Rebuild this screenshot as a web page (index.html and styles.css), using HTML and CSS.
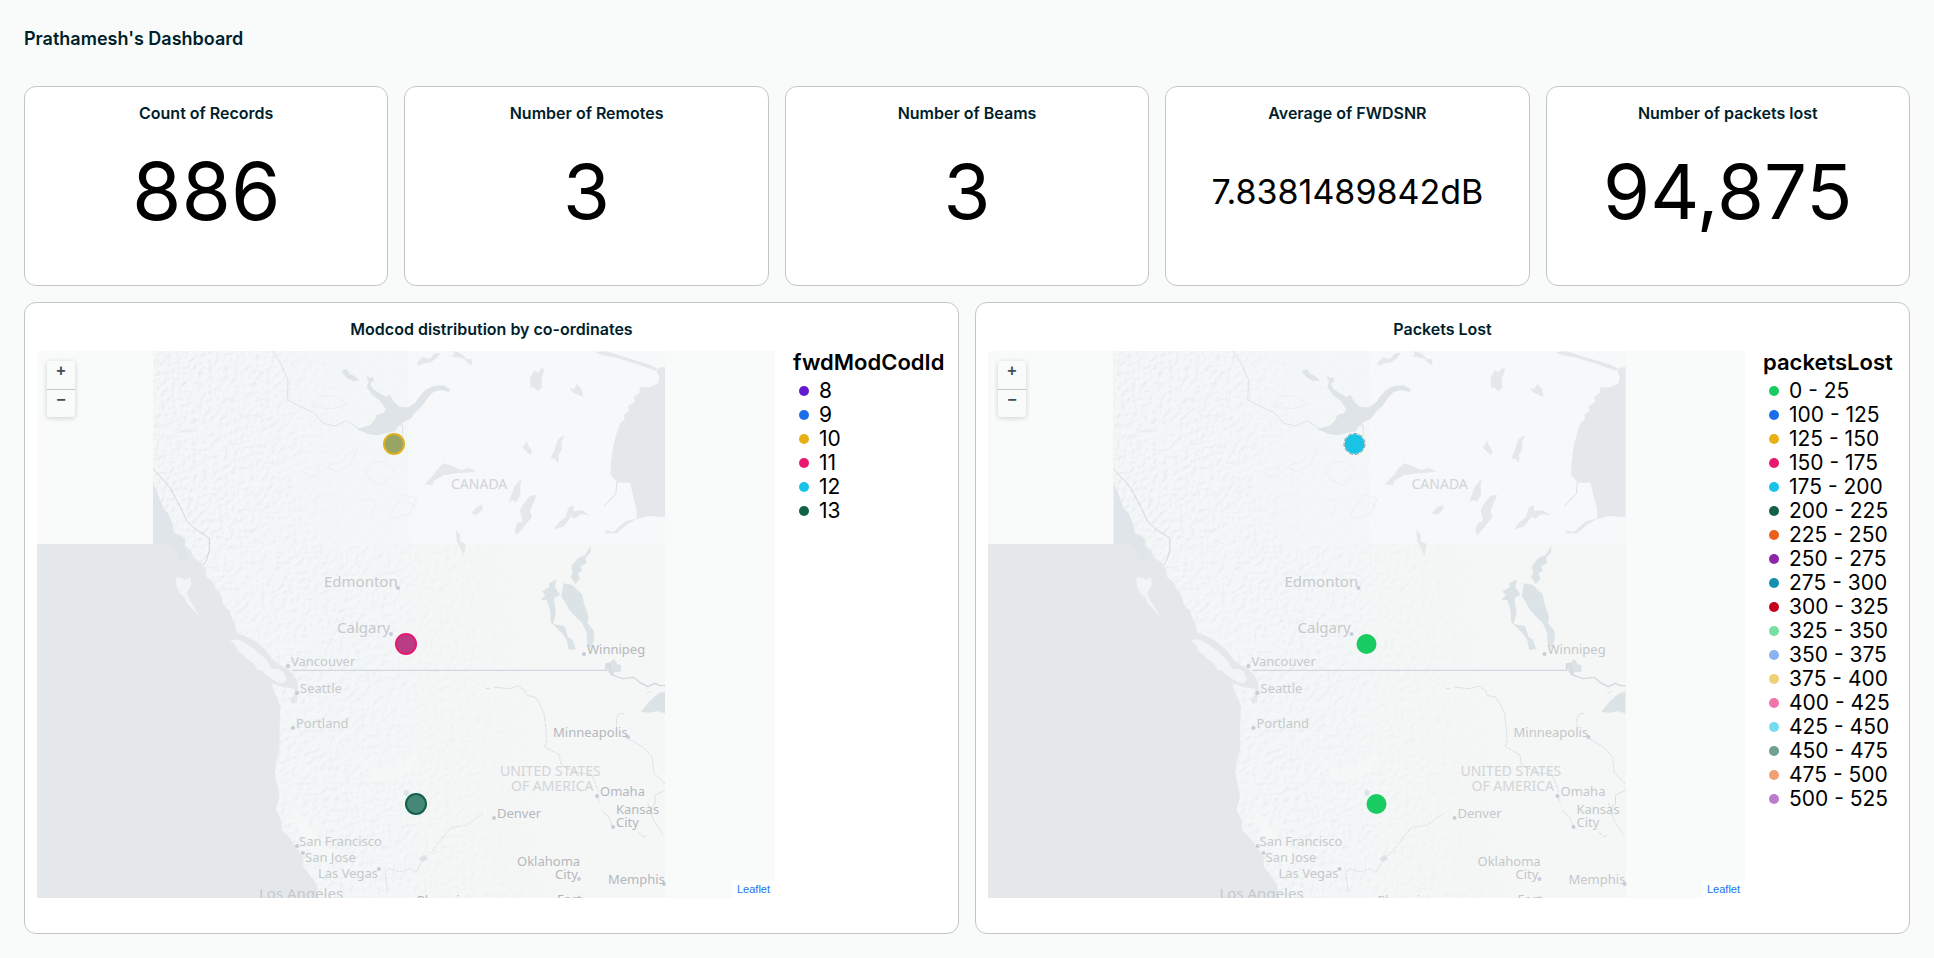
FILE: index.html
```html
<!DOCTYPE html>
<html lang="en">
<head>
<meta charset="utf-8">
<title>Prathamesh's Dashboard</title>
<link rel="stylesheet" href="styles.css">
</head>
<body>
<svg class="defs" width="0" height="0" aria-hidden="true">
  <defs>
    <filter id="relief" x="0" y="0" width="100%" height="100%" color-interpolation-filters="sRGB">
      <feTurbulence type="fractalNoise" baseFrequency="0.19" numOctaves="4" seed="7"/>
      <feDiffuseLighting surfaceScale="2" lighting-color="#ffffff" result="l"><feDistantLight azimuth="225" elevation="55"/></feDiffuseLighting>
      <feColorMatrix type="matrix" values="0 0 0 0 .55  0 0 0 0 .6  0 0 0 0 .63  -1.2 0 0 0 1.02"/>
    </filter>
    <linearGradient id="fadeEast" x1="153" x2="560" y1="0" y2="0" gradientUnits="userSpaceOnUse">
      <stop offset="0" stop-color="#fff"/><stop offset=".3" stop-color="#fff" stop-opacity=".8"/><stop offset=".5" stop-color="#fff" stop-opacity=".15"/><stop offset="1" stop-color="#fff" stop-opacity="0"/>
    </linearGradient>
    <linearGradient id="fadeSouth" x1="153" x2="560" y1="544" y2="500" gradientUnits="userSpaceOnUse">
      <stop offset="0" stop-color="#fff"/><stop offset=".4" stop-color="#fff" stop-opacity=".9"/><stop offset=".75" stop-color="#fff" stop-opacity=".5"/><stop offset=".9" stop-color="#fff" stop-opacity="0"/>
    </linearGradient>
    <path id="coast" d="M399 153H1935V1794H895L890 1755 870 1725 850 1700V1672L830 1645 812 1618 800 1605 785 1590 784 1560 768 1530 778 1490 775 1470 764 1420 768 1390 778 1350 780 1240 782 1220 770 1190 760 1168 755 1150 790 1162 812 1164 824 1168 820 1188 810 1198 816 1212 830 1208 834 1160 828 1138 818 1122 800 1104 790 1100 770 1090 748 1066 738 1050 720 1035 704 1022 690 1015 668 1004 650 1000 645 970 634 950 628 930 612 918 600 880 588 866 578 845 560 832 556 808 545 790 520 772 512 750 496 738 494 716 478 704 462 700 458 672 444 640 430 625 420 600 412 578 404 560 399 543Z"/>
    <clipPath id="landClip" clipPathUnits="userSpaceOnUse"><use href="#coast" transform="translate(20 300) scale(.33333)"/></clipPath>
    <mask id="northMask" maskUnits="userSpaceOnUse" x="153" y="351" width="512" height="193"><rect x="153" y="351" width="512" height="193" fill="url(#fadeEast)"/></mask>
    <mask id="southMask" maskUnits="userSpaceOnUse" x="153" y="544" width="512" height="360"><rect x="153" y="544" width="512" height="360" fill="url(#fadeSouth)"/></mask>
    <symbol id="terrain" viewBox="-94 351 1000 547" overflow="visible">
      <rect x="-300" y="544" width="965" height="360" fill="#e4e8eb"/>
      <rect x="153" y="351" width="512" height="193" fill="#e0e5e9"/>
      <g transform="translate(20 300) scale(.33333)">
        <use href="#coast" fill="#f4f7f8"/>
        <rect x="1168" y="153" width="767" height="579" fill="#f6f8fa"/>
        <rect x="1168" y="732" width="767" height="1062" fill="#f5f7f7"/>
      </g>
      <g clip-path="url(#landClip)">
        <g mask="url(#northMask)"><rect x="153" y="351" width="512" height="193" filter="url(#relief)" opacity=".2"/></g>
        <g mask="url(#southMask)"><rect x="153" y="544" width="512" height="360" filter="url(#relief)" opacity=".16"/></g>
      </g>
      <g transform="translate(20 300) scale(.33333)">
        <g fill="#f2f5f7">
          <path d="M467 832 488 834 494 840 512 832 514 856 500 878 508 898 518 914 540 950 520 930 498 905 494 890 482 884 470 860Z"/>
          <path d="M630 1022 648 1018 664 1022 684 1034 704 1048 720 1062 740 1080 748 1095 756 1108 774 1106 790 1115 800 1138 790 1150 770 1146 752 1134 738 1126 726 1112 712 1110 700 1090 680 1076 668 1062 652 1052 648 1036Z"/>
        </g>
        <g fill="#e0e5e9">
          <path d="M404 610 416 612 424 634 416 650 404 636ZM430 650 444 660 440 678 454 690 446 706 430 690 420 672ZM458 708 480 716 486 734 500 750 506 780 490 790 478 776 468 752 456 736ZM408 668 416 690 410 712 402 700Z"/>
        </g>
        <g fill="#dfe4e9">
          <path d="M964 214 978 206 990 222 1004 228 1018 242 998 242 980 234Z"/>
          <path d="M1038 226 1050 234 1058 230 1062 242 1050 252 1060 268 1078 280 1096 290 1110 284 1120 304 1138 320 1164 322 1186 308 1198 290 1216 270 1240 258 1270 256 1290 268 1288 276 1262 270 1240 276 1224 292 1206 318 1186 336 1172 356 1150 366 1132 382 1126 394 1104 398 1074 406 1044 402 1010 388 1030 382 1050 376 1066 358 1070 344 1090 340 1098 328 1080 302 1058 286 1040 262 1046 246Z"/>
        </g>
        <g fill="#e4e8ea" transform="translate(1140 0)">
          <path d="M795 200 776 204 770 216 778 230 774 250 750 262H720L718 278 702 290 704 306 684 318 688 332 672 344 674 358 660 370 650 400 640 436 633 490 632 525 652 548H690L700 590 710 630V658L745 648 795 652Z"/>
          <path d="M585 156 620 154 690 176 750 194 774 206 764 212 710 192 650 174 606 166Z"/>
          <path d="M50 190 66 172 88 178 104 160 122 158 108 176 90 188 70 190 58 198ZM146 168 162 166 160 154 174 156 188 164 200 178 214 176 216 196 204 190 192 176 172 172Z"/>
          <path d="M390 236 402 212 416 216 424 204 434 208 424 238 426 262 414 274 402 262 392 264ZM508 264 522 268 530 252 544 266 550 292 534 284 520 278Z"/>
          <path d="M366 440 376 434 378 420 386 438 396 452 392 466 380 456ZM452 476 462 452 468 436 474 418 494 404 484 428 486 448 476 462 476 490 464 476Z"/>
          <path d="M74 552 94 532 114 506 130 490 150 496 182 510 204 504 230 514 200 518 170 520 130 526 102 542 98 556Z"/>
          <path d="M326 608 334 586 342 562 356 544 364 538 360 562 362 586 348 606 338 600ZM214 640 230 622 248 614 248 628 230 644ZM344 694 352 668 368 664 360 630 376 604 390 588 410 584 400 610 390 632 396 652 378 672 366 688 350 706Z"/>
          <path d="M460 688 478 666 496 652 506 622 520 616 522 634 546 630 568 646 544 642 524 656 512 650 500 668 490 680ZM614 690 640 696 676 664 710 656 680 674 650 700 618 700Z"/>
          <path d="M168 690 180 704 180 724 198 732 192 768 178 738 170 724Z"/>
        </g>
        <g fill="#dce3e7" transform="translate(1140 0)">
          <path d="M572 738 572 756 556 774 560 790 540 800 548 812 534 820 540 836 526 852 512 832 518 818 514 798 534 774 556 764Z"/>
          <path d="M484 890 490 850 516 854 530 868 546 882 552 910 566 950 562 968 580 990 584 1010 576 1044 562 1036 560 1000 546 968 528 952 508 930 494 904Z"/>
          <path d="M422 900 436 886 426 874 448 862 446 850 470 838 464 860 480 884 462 894 464 912 468 940 460 972 494 978 504 1010 518 1020 528 1048 506 1050 500 1020 486 1000 468 982 452 966 450 930 440 900Z"/>
          <path d="M618 1092 632 1086 642 1076 652 1092 664 1096 662 1116 644 1116 634 1128 620 1110Z"/>
          <path d="M722 1236 748 1204 776 1180 795 1174V1240L770 1234 748 1238Z"/>
          <path d="M14 1468 28 1474 24 1490 12 1484ZM56 1676 72 1664 84 1676 68 1686Z"/>
        </g>
        <g fill="none" stroke="#d9e0e4" stroke-width="3" stroke-linejoin="round">
          <path d="M758 153 782 190 804 240 802 300 838 318 884 340 910 370 944 378 980 362 1020 388" stroke="#dde2e7"/>
          <path d="M1790 548 1788 580 1752 618M1880 1181 1895 1174"/>
          <path d="M1396 1166 1410 1166M1422 1162 1470 1166 1492 1158 1514 1170 1520 1186 1546 1192 1560 1214 1572 1240 1578 1290 1580 1320 1574 1340 1596 1352 1618 1364 1622 1392 1640 1404M1640 1404 1680 1420 1714 1422 1736 1476M1812 1240 1796 1242 1789 1256 1790 1280M1826 1316 1870 1342 1896 1370 1902 1420 1935 1452M1732 1490 1740 1510M1744 1530 1766 1550 1778 1580M1855 1596 1870 1610 1880 1606M1884 1510 1900 1560 1930 1606" stroke-dasharray="14 2"/>
          <path d="M1935 1470 1905 1486V1512L1890 1524"/>
          <path d="M1390 1540 1360 1560 1340 1576 1294 1582 1270 1610 1240 1650 1210 1676 1188 1716 1170 1706 1140 1716 1105 1706 1096 1720 1104 1780" stroke-dasharray="9 3"/>
        </g>
        <g fill="none" stroke="#e6ebed" stroke-width="3" opacity=".7">
          <path d="M640 324 670 350 700 344 770 370M875 322 900 290 940 286 984 314 940 326ZM1036 515 1060 484 1100 486 1126 516 1088 554 1050 540ZM920 500 960 484 1016 440 990 494 950 516ZM1034 596 1068 604 1056 650M1110 640 1150 584 1190 596 1170 640 1120 656ZM880 480 902 520 860 530M1164 606 1190 620"/>
        </g>
        <path d="M1146 376H1148V410M1138 376H1148" fill="none" stroke="#dde1e6" stroke-width="3"/>
        <path d="M399 507 430 540 452 566 480 620 504 668 530 690 568 714V750L560 780 550 795" fill="none" stroke="#d3d7de" stroke-width="3"/>
        <path d="M815 1111H1758V1092H1768L1776 1124 1806 1136 1842 1132 1860 1148 1884 1160 1904 1150 1920 1157H1935" fill="none" stroke="#d4d6de" stroke-width="4"/>
        <path d="M820 1530 850 1550 880 1600 935 1650 940 1690 910 1700 870 1650 840 1600Z" fill="#f6f8f7"/>
        <path d="M1010 1360 1070 1405 1130 1400 1190 1350 1200 1390 1130 1440 1060 1440Z" fill="#f6f8f7" opacity=".7"/>
      </g>
    </symbol>
    <g id="cities" fill="#c7ccd6">
      <circle cx="398" cy="588" r="2"/><circle cx="391" cy="634" r="2"/><circle cx="288" cy="666" r="2"/><circle cx="297" cy="693" r="2"/><circle cx="293" cy="728" r="2"/><circle cx="297" cy="846" r="2"/><circle cx="303" cy="853" r="2"/><circle cx="379" cy="869" r="2"/><circle cx="584" cy="654" r="2"/><circle cx="628" cy="737" r="2"/><circle cx="597" cy="796" r="2"/><circle cx="613" cy="827" r="2"/><circle cx="494" cy="818" r="2"/><circle cx="579" cy="879" r="2"/><circle cx="664" cy="884" r="2"/>
    </g>
  </defs>
</svg>

<header class="page-header"><h1>Prathamesh's Dashboard</h1></header>

<main class="dashboard">
  <section class="stats">
    <article class="card"><h2>Count of Records</h2><p class="value">886</p></article>
    <article class="card"><h2>Number of Remotes</h2><p class="value value-medium">3</p></article>
    <article class="card"><h2>Number of Beams</h2><p class="value value-medium">3</p></article>
    <article class="card"><h2>Average of FWDSNR</h2><p class="value value-small">7.8381489842dB</p></article>
    <article class="card"><h2>Number of packets lost</h2><p class="value value-medium">94,875</p></article>
  </section>

  <section class="charts">
    <article class="card chart">
      <h2>Modcod distribution by co-ordinates</h2>
      <div class="chart-body">
        <div class="map">
          <svg class="map-canvas" viewBox="-94 351 1000 547" preserveAspectRatio="xMidYMid slice" role="img" aria-label="Map of western North America">
            <use href="#terrain" x="-94" y="351" width="1000" height="547"/>
            <use href="#cities"/>
            <g class="labels">
              <text class="big" x="324" y="587">Edmonton</text><text class="big" x="337" y="633">Calgary</text>
              <text x="291" y="666">Vancouver</text><text x="300" y="693">Seattle</text><text x="296" y="728">Portland</text>
              <text x="299" y="846">San Francisco</text><text x="305" y="862">San Jose</text><text x="318" y="878">Las Vegas</text>
              <text class="big" x="259" y="899">Los Angeles</text><text class="dark" x="417" y="905">Phoenix</text><text class="dark" x="557" y="904">Fort</text>
              <text class="dark" x="587" y="654">Winnipeg</text><text class="dark" x="553" y="737">Minneapolis</text>
              <text class="dark" x="600" y="796">Omaha</text><text class="dark" x="616" y="814">Kansas</text><text class="dark" x="616" y="827">City</text>
              <text class="dark" x="497" y="818">Denver</text><text class="dark" x="517" y="866">Oklahoma</text><text class="dark" x="555" y="879">City</text><text class="dark" x="608" y="884">Memphis</text>
              <text class="country" x="451" y="489">CANADA</text><text class="country" x="500" y="776">UNITED STATES</text><text class="country" x="511" y="791">OF AMERICA</text>
            </g>
            <g stroke-width="2">
              <circle cx="394" cy="444" r="10" fill="#97a465" stroke="#deb01f"/>
              <circle cx="406" cy="644" r="10" fill="#b93c87" stroke="#e5196e"/>
              <circle cx="416" cy="804" r="10" fill="#468878" stroke="#116149"/>
            </g>
          </svg>
          <div class="zoom-control"><button type="button" aria-label="Zoom in">+</button><button type="button" aria-label="Zoom out">−</button></div>
          <a class="attribution" href="#">Leaflet</a>
        </div>
        <aside class="legend legend-wide">
          <h3>fwdModCodId</h3>
          <ul>
            <li class="violet">8</li><li class="blue">9</li><li class="yellow">10</li><li class="pink">11</li><li class="cyan">12</li><li class="forest">13</li>
          </ul>
        </aside>
      </div>
    </article>

    <article class="card chart">
      <h2>Packets Lost</h2>
      <div class="chart-body">
        <div class="map">
          <svg class="map-canvas" viewBox="-94 351 1000 547" preserveAspectRatio="xMidYMid slice" role="img" aria-label="Map of western North America">
            <use href="#terrain" x="-94" y="351" width="1000" height="547"/>
            <use href="#cities"/>
            <g class="labels soft">
              <text class="big" x="324" y="587">Edmonton</text><text class="big" x="337" y="633">Calgary</text>
              <text x="291" y="666">Vancouver</text><text x="300" y="693">Seattle</text><text x="296" y="728">Portland</text>
              <text x="299" y="846">San Francisco</text><text x="305" y="862">San Jose</text><text x="318" y="878">Las Vegas</text>
              <text class="big" x="259" y="899">Los Angeles</text><text class="dark" x="417" y="905">Phoenix</text><text class="dark" x="557" y="904">Fort</text>
              <text class="dark" x="587" y="654">Winnipeg</text><text class="dark" x="553" y="737">Minneapolis</text>
              <text class="dark" x="600" y="796">Omaha</text><text class="dark" x="616" y="814">Kansas</text><text class="dark" x="616" y="827">City</text>
              <text class="dark" x="497" y="818">Denver</text><text class="dark" x="517" y="866">Oklahoma</text><text class="dark" x="555" y="879">City</text><text class="dark" x="608" y="884">Memphis</text>
              <text class="country" x="451" y="489">CANADA</text><text class="country" x="500" y="776">UNITED STATES</text><text class="country" x="511" y="791">OF AMERICA</text>
            </g>
            <circle cx="394" cy="444" r="10" fill="#19c3e6"/>
            <circle cx="394" cy="444" r="10.5" fill="none" stroke="#8a9a9c" stroke-width="1" stroke-dasharray="4 2"/>
            <circle cx="406" cy="644" r="10" fill="#19cc61"/>
            <circle cx="416" cy="804" r="10" fill="#19cc61"/>
          </svg>
          <div class="zoom-control"><button type="button" aria-label="Zoom in">+</button><button type="button" aria-label="Zoom out">−</button></div>
          <a class="attribution" href="#">Leaflet</a>
        </div>
        <aside class="legend">
          <h3>packetsLost</h3>
          <ul>
            <li class="green">0 - 25</li><li class="blue">100 - 125</li><li class="yellow">125 - 150</li><li class="pink">150 - 175</li><li class="cyan">175 - 200</li><li class="forest">200 - 225</li><li class="orange">225 - 250</li><li class="purple">250 - 275</li><li class="teal">275 - 300</li><li class="red">300 - 325</li><li class="mint">325 - 350</li><li class="sky">350 - 375</li><li class="sand">375 - 400</li><li class="rose">400 - 425</li><li class="aqua">425 - 450</li><li class="sage">450 - 475</li><li class="peach">475 - 500</li><li class="lilac">500 - 525</li>
          </ul>
        </aside>
      </div>
    </article>
  </section>
</main>
</body>
</html>
```

FILE: styles.css
```css
* { box-sizing: border-box; }
body {
  margin: 0;
  padding: 24px;
  background: #f9fbfa;
  color: #001e2b;
  font-family: Inter, "Liberation Sans", sans-serif;
}
h1, h2, h3, p, ul { margin: 0; padding: 0; }
.defs { position: absolute; }
.page-header { padding-bottom: 32px; }
h1 { font-size: 18px; line-height: 30px; font-weight: 600; }
.dashboard { display: grid; gap: 16px; }
.stats { display: grid; grid-template-columns: repeat(5, 1fr); gap: 16px; }
.charts { display: grid; grid-template-columns: repeat(2, minmax(0, 1fr)); gap: 16px; }
.card {
  display: flex;
  flex-direction: column;
  min-width: 0;
  padding: 14px 12px;
  border: 1px solid #c1c7c6;
  border-radius: 12px;
  background: #fff;
}
.stats .card { min-height: 200px; }
.card h2 { font-size: 16px; line-height: 24px; font-weight: 600; text-align: center; }
.value {
  display: flex;
  align-items: center;
  justify-content: center;
  height: 132px;
  color: #000;
  font-size: 80px;
  line-height: 1;
}
.value-medium { font-size: 76px; }
.value-small { height: 134px; font-size: 34px; }
.chart { padding-bottom: 35px; }
.chart-body { display: flex; align-items: flex-start; gap: 18px; padding-top: 10px; }
.map { position: relative; flex: 1; min-width: 0; height: 547px; overflow: hidden; background: #f9fbfa; }
.map-canvas { display: block; width: 100%; height: 100%; }
.labels { font-family: "Noto Sans", sans-serif; font-size: 13px; fill: #c6c9cb; }
.labels .big { font-size: 15px; }
.labels .dark { fill: #b4b8bb; }
.labels .country { font-size: 14px; fill: #d2d4d8; }
.labels.soft .dark { fill: #c4c8ca; }
.zoom-control {
  position: absolute;
  top: 10px;
  left: 10px;
  display: grid;
  width: 28px;
  border-radius: 3px;
  box-shadow: 0 1px 5px rgba(0, 30, 43, .2);
  overflow: hidden;
}
.zoom-control button {
  height: 28px;
  padding: 0 0 8px;
  border: 0;
  background: #f9fbfa;
  color: #3d4f58;
  font: 700 16px/20px "Liberation Sans", sans-serif;
}
.zoom-control button + button { border-top: 1px solid #c1c7c6; }
.attribution {
  position: absolute;
  right: 0;
  bottom: 0;
  padding: 0 5px;
  background: rgba(255, 255, 255, .7);
  color: #1a73f5;
  font: 11px/17px "Liberation Sans", sans-serif;
  text-decoration: none;
}
.legend { flex: 0 0 134px; color: #000; font-size: 21px; line-height: 24px; }
.legend-wide { flex-basis: 153px; }
.legend h3 { font-size: 22px; line-height: 22px; font-weight: 600; padding-bottom: 6px; }
.legend ul { list-style: none; }
.legend li { display: flex; align-items: center; gap: 10px; padding-left: 6px; white-space: nowrap; }
.legend li::before { content: ""; width: 10px; height: 10px; border-radius: 50%; background: var(--dot); }
.violet { --dot: #6219d1; }
.green { --dot: #19cc61; }
.blue { --dot: #1a6fe8; }
.yellow { --dot: #e6b117; }
.pink { --dot: #e8196e; }
.cyan { --dot: #19c3e6; }
.forest { --dot: #116149; }
.orange { --dot: #e86019; }
.purple { --dot: #8b27a8; }
.teal { --dot: #1591ad; }
.red { --dot: #c4001f; }
.mint { --dot: #75e0a0; }
.sky { --dot: #8cb2f2; }
.sand { --dot: #f0d074; }
.rose { --dot: #f075a8; }
.aqua { --dot: #75dcf0; }
.sage { --dot: #70a092; }
.peach { --dot: #f0a075; }
.lilac { --dot: #b97dcc; }
```
